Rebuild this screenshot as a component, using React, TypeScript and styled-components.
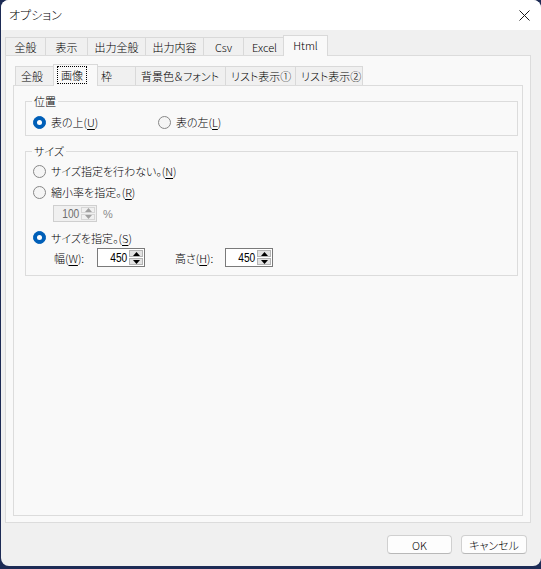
import styled, { createGlobalStyle } from "styled-components";

const GlobalStyle = createGlobalStyle`
    html, body {
        margin: 0;
        padding: 0;
        background: #1d2b55;
    }
    body {
        font-family: "Noto Sans CJK JP", "Noto Sans", sans-serif;
        font-size: 11px;
        font-weight: 300;
        color: #000;
        font-feature-settings: "palt";
    }
    u { text-underline-offset: 2px; }
`;

const Page = styled.div`
    width: 541px;
    height: 569px;
    overflow: hidden;
`;

const Window = styled.div`
    width: 540px;
    height: 566px;
    margin-left: 1px;
    background: #f0f0f0;
    border-radius: 8px;
    overflow: hidden;
    display: flex;
    flex-direction: column;
`;

const TitleBar = styled.div`
    height: 30px;
    flex: none;
    background: #fff;
    display: flex;
    align-items: center;
    justify-content: space-between;
    padding: 0 11px 0 8px;
    line-height: 14px;
    font-size: 12px;
`;

const Body = styled.div`
    flex: 1;
    display: flex;
    flex-direction: column;
    padding: 5px 10px 0 4px;
    min-height: 0;
`;

const TabRow = styled.div<{ $h: number; $pad: number }>`
    height: ${p => p.$h}px;
    flex: none;
    display: flex;
    align-items: flex-end;
    padding-left: ${p => p.$pad}px;
`;

const Tab = styled.div<{ $w: number; $h: number; $active?: boolean; $center?: boolean }>`
    box-sizing: border-box;
    width: ${p => p.$w}px;
    height: ${p => p.$h}px;
    border: 1px solid #d9d9d9;
    border-bottom: none;
    background: ${p => p.$active ? '#f9f9f9' : '#f0f0f0'};
    margin-right: ${p => p.$active ? -3 : -1}px;
    margin-left: ${p => p.$active ? -2 : 0}px;
    margin-bottom: ${p => p.$active ? -1 : 0}px;
    position: ${p => p.$active ? 'relative' : 'static'};
    z-index: ${p => p.$active ? 2 : 'auto'};
    display: flex;
    align-items: center;
    justify-content: ${p => p.$center ? 'center' : 'flex-start'};
    padding: 0 0 ${p => p.$active ? 2 : 0}px ${p => p.$center ? 0 : p.$active ? 7 : 5}px;
    white-space: nowrap;
    line-height: 14px;
`;

const Focus = styled.span`
    outline: 1px dotted #000;
    outline-offset: 1px;
    padding: 0 2px;
    margin-left: -2px;
`;

const Panel = styled.div<{ $pad: string }>`
    flex: 1;
    min-height: 0;
    box-sizing: border-box;
    border: 1px solid #dcdcdc;
    background: #f9f9f9;
    display: flex;
    flex-direction: column;
    padding: ${p => p.$pad};
`;

const Group = styled.fieldset<{ $gap?: number }>`
    margin: ${p => p.$gap ?? 0}px 0 0 0;
    padding: 0;
    border: 1px solid #dcdcdc;
    min-width: 0;
`;

const Legend = styled.legend`
    margin-left: 6px;
    padding: 0 2px;
    line-height: 14px;
`;

const GroupBody = styled.div<{ $pad: string }>`
    display: flex;
    flex-direction: column;
    padding: ${p => p.$pad};
`;

const Row = styled.div<{ $h: number; $top?: number; $indent?: number }>`
    height: ${p => p.$h}px;
    margin-top: ${p => p.$top ?? 0}px;
    padding-left: ${p => p.$indent ?? 0}px;
    display: flex;
    align-items: center;
    white-space: nowrap;
    line-height: 14px;
`;

const RadioItem = styled.label<{ $w?: number }>`
    display: flex;
    align-items: center;
    gap: 5px;
    width: ${p => p.$w ? `${p.$w}px` : 'auto'};
`;

const Circle = styled.span<{ $on?: boolean }>`
    box-sizing: border-box;
    width: 13px;
    height: 13px;
    border-radius: 50%;
    flex: none;
    display: flex;
    align-items: center;
    justify-content: center;
    background: ${p => p.$on ? '#005fb8' : '#f5f5f5'};
    border: 1px solid ${p => p.$on ? '#005fb8' : '#878787'};

    &::after {
        content: '';
        width: 5px;
        height: 5px;
        border-radius: 50%;
        background: ${p => p.$on ? '#fff' : 'transparent'};
    }
`;

const Spin = styled.div<{ $w: number; $h: number; $disabled?: boolean }>`
    box-sizing: border-box;
    width: ${p => p.$w}px;
    height: ${p => p.$h}px;
    border: 1px solid ${p => p.$disabled ? '#cfcfcf' : '#7a7a7a'};
    background: ${p => p.$disabled ? '#f0f0f0' : '#fff'};
    color: ${p => p.$disabled ? '#6d6d6d' : '#000'};
    display: flex;
    align-items: center;
    padding: 1px 1px 1px 0;
    font-family: "Liberation Sans", "Noto Sans", sans-serif;
    font-size: 12px;
    font-weight: 400;
`;

const SpinValue = styled.span`
    flex: 1;
    text-align: right;
    padding-right: 2px;
    transform: scaleX(0.85);
    transform-origin: right center;
`;

const UpDown = styled.div`
    width: 14px;
    height: 100%;
    display: flex;
    flex-direction: column;
    gap: 1px;
    flex: none;
`;

const Arrow = styled.div<{ $disabled?: boolean }>`
    flex: 1;
    box-sizing: border-box;
    background: ${p => p.$disabled ? '#f0f0f0' : '#e3e3e3'};
    border: 1px solid ${p => p.$disabled ? '#d6d6d6' : '#b4b4b4'};
    display: flex;
    align-items: center;
    justify-content: center;
`;

const Unit = styled.span`
    color: #8a8a8a;
    margin-left: 6px;
    font-family: "Liberation Sans", sans-serif;
    font-size: 11px;
`;

const FieldLabel = styled.span<{ $w: number }>`
    width: ${p => p.$w}px;
    flex: none;
`;

const Footer = styled.div`
    height: 19px;
    flex: none;
    margin: 12px 0 12px;
    display: flex;
    justify-content: flex-end;
    gap: 9px;
    padding-right: 4px;
`;

const Button = styled.button<{ $w: number }>`
    box-sizing: border-box;
    width: ${p => p.$w}px;
    height: 19px;
    border: 1px solid #d0d0d0;
    border-bottom-color: #b8b8b8;
    border-radius: 4px;
    background: #fdfdfd;
    font-family: inherit;
    font-size: 11px;
    font-weight: 300;
    font-feature-settings: "palt";
    line-height: 14px;
    padding: 0;
    color: #000;
`;

const Tri = ({ up, color }: { up?: boolean; color: string }) => (
    <svg width="7" height="4" viewBox="0 0 7 4">
        <polygon points={up ? "0,4 7,4 3.5,0" : "0,0 7,0 3.5,4"} fill={color} />
    </svg>
);

const Spinner = ({ value, w, h, disabled }: { value: string; w: number; h: number; disabled?: boolean }) => (
    <Spin $w={w} $h={h} $disabled={disabled}>
        <SpinValue>{value}</SpinValue>
        <UpDown>
            <Arrow $disabled={disabled}><Tri up color={disabled ? '#a0a0a0' : '#000'} /></Arrow>
            <Arrow $disabled={disabled}><Tri color={disabled ? '#a0a0a0' : '#000'} /></Arrow>
        </UpDown>
    </Spin>
);

const Radio = ({ on, w, children }: { on?: boolean; w?: number; children: React.ReactNode }) => (
    <RadioItem $w={w}>
        <Circle $on={on} />
        <span>{children}</span>
    </RadioItem>
);

const OUTER_TABS = [
    { label: '全般', w: 41 },
    { label: '表示', w: 43 },
    { label: '出力全般', w: 59 },
    { label: '出力内容', w: 59 },
    { label: 'Csv', w: 41 },
    { label: 'Excel', w: 43 },
    { label: 'Html', w: 45, active: true },
];

const INNER_TABS = [
    { label: '全般', w: 41 },
    { label: '画像', w: 45, active: true },
    { label: '枠', w: 41 },
    { label: '背景色＆フォント', w: 91 },
    { label: 'リスト表示①', w: 71 },
    { label: 'リスト表示②', w: 68 },
];

export default function App() {
    return (
        <Page>
            <GlobalStyle />
            <Window>
                <TitleBar>
                    <span>オプション</span>
                    <svg width="11" height="11" viewBox="0 0 11 11">
                        <path d="M0.5 0.5 L10.5 10.5 M10.5 0.5 L0.5 10.5" stroke="#1a1a1a" strokeWidth="1" />
                    </svg>
                </TitleBar>

                <Body>
                    <TabRow $h={20} $pad={0}>
                        {OUTER_TABS.map(t => (
                            <Tab key={t.label} $w={t.w} $h={t.active ? 21 : 18} $active={t.active} $center>
                                {t.label}
                            </Tab>
                        ))}
                    </TabRow>

                    <Panel $pad="8px 7px 6px 7px">
                        <TabRow $h={21} $pad={2}>
                            {INNER_TABS.map(t => (
                                <Tab key={t.label} $w={t.w} $h={t.active ? 22 : 19} $active={t.active}>
                                    {t.active ? <Focus>{t.label}</Focus> : t.label}
                                </Tab>
                            ))}
                        </TabRow>

                        <Panel $pad="8px 4px 0 11px">
                            <Group>
                                <Legend>位置</Legend>
                                <GroupBody $pad="6px 0 5px 7px">
                                    <Row $h={16}>
                                        <Radio on w={125}>表の上(<u>U</u>)</Radio>
                                        <Radio>表の左(<u>L</u>)</Radio>
                                    </Row>
                                </GroupBody>
                            </Group>

                            <Group $gap={8}>
                                <Legend>サイズ</Legend>
                                <GroupBody $pad="2px 0 8px 7px">
                                    <Row $h={22}>
                                        <Radio>サイズ指定を行わない。(<u>N</u>)</Radio>
                                    </Row>
                                    <Row $h={20}>
                                        <Radio>縮小率を指定。(<u>R</u>)</Radio>
                                    </Row>
                                    <Row $h={17} $top={3} $indent={20}>
                                        <Spinner value="100" w={44} h={17} disabled />
                                        <Unit>%</Unit>
                                    </Row>
                                    <Row $h={21} $top={5}>
                                        <Radio on>サイズを指定。(<u>S</u>)</Radio>
                                    </Row>
                                    <Row $h={19} $indent={21}>
                                        <FieldLabel $w={43}>幅(<u>W</u>):</FieldLabel>
                                        <Spinner value="450" w={48} h={19} />
                                        <FieldLabel $w={30} />
                                        <FieldLabel $w={50}>高さ(<u>H</u>):</FieldLabel>
                                        <Spinner value="450" w={48} h={19} />
                                    </Row>
                                </GroupBody>
                            </Group>
                        </Panel>
                    </Panel>

                    <Footer>
                        <Button $w={65}>OK</Button>
                        <Button $w={66}>キャンセル</Button>
                    </Footer>
                </Body>
            </Window>
        </Page>
    );
}
